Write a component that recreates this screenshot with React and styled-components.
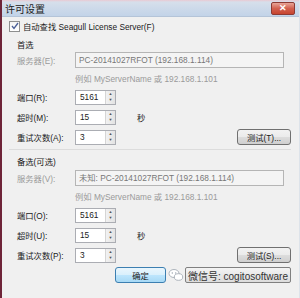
import React from 'react';
import styled, { createGlobalStyle } from 'styled-components';

const GlobalStyle = createGlobalStyle`
  body {
    margin: 0;
    background: #fff;
  }
`;

const Window = styled.div`
  width: 300px;
  height: 298px;
  box-sizing: border-box;
  border-left: 2px solid #6e2438;
  border-right: 1px solid #dde3ea;
  background: #f0f0f0;
  display: flex;
  flex-direction: column;
  font-family: 'Liberation Sans', 'Noto Sans CJK SC', sans-serif;
  font-size: 8.3px;
  color: #1a1a1a;
  overflow: hidden;
`;

const TitleBar = styled.div`
  height: 16px;
  flex: none;
  display: flex;
  align-items: center;
  justify-content: space-between;
  padding: 0 4px 0 3px;
  background: linear-gradient(#e9c9d2 0, #d6dfeb 2px, #c2d3e8 100%);
  border-bottom: 1px solid #b4c4d8;
  font-size: 10px;
  color: #222;
`;

const CloseButton = styled.div`
  width: 22px;
  height: 11px;
  border-radius: 2px;
  border: 1px solid #8c3a34;
  background: linear-gradient(#e8a497, #d2604f 50%, #c7442f);
  display: flex;
  align-items: center;
  justify-content: center;
  color: #fff;
  font-size: 9px;
  font-weight: bold;
  line-height: 1;
`;

const Body = styled.div`
  flex: 1;
  display: flex;
  flex-direction: column;
  padding: 2px 8px 0 7px;
`;

const CheckRow = styled.label`
  display: flex;
  align-items: center;
  gap: 3px;
  height: 14px;
`;

const Box = styled.span`
  width: 9px;
  height: 9px;
  border: 1px solid #8e8f8f;
  background: linear-gradient(#f4f4f4, #fff);
  display: flex;
  align-items: center;
  justify-content: center;
`;

const Group = styled.div`
  display: flex;
  flex-direction: column;
  padding: 0 0 0 8px;
  border-bottom: ${({ $last }) => ($last ? 'none' : '1px solid #dcdcdc')};
  padding-bottom: ${({ $last }) => ($last ? '0' : '2px')};
`;

const GroupTitle = styled.div`
  height: 14px;
  line-height: 14px;
  margin-top: ${({ $top }) => $top}px;
  margin-bottom: ${({ $bottom }) => $bottom}px;
`;

const Row = styled.div`
  display: flex;
  align-items: center;
  height: ${({ $h }) => $h || 20}px;
`;

const Label = styled.span`
  width: 58px;
  flex: none;
  color: ${({ $muted }) => ($muted ? '#9a9a9a' : '#1a1a1a')};
`;

const TextBox = styled.div`
  width: 209px;
  height: 16px;
  box-sizing: border-box;
  border: 1px solid #b5b5b5;
  background: #f4f4f4;
  color: #777;
  padding-left: 3px;
  line-height: 14px;
  white-space: nowrap;
  overflow: hidden;
`;

const Hint = styled.div`
  padding: 4px 0 0 58px;
  height: 15px;
  line-height: 14px;
  color: #9a9a9a;
  white-space: nowrap;
`;

const Spin = styled.div`
  width: 41px;
  height: 15px;
  box-sizing: border-box;
  border: 1px solid #abadb3;
  background: #fff;
  display: flex;
`;

const SpinValue = styled.span`
  flex: 1;
  padding-left: 4px;
  line-height: 13px;
`;

const SpinArrows = styled.span`
  width: 9px;
  display: flex;
  flex-direction: column;
  border-left: 1px solid #d5d5d5;
  background: linear-gradient(90deg, #f2f2f2, #e3e3e3);
  align-items: center;
  justify-content: space-around;
  font-size: 4px;
  color: #555;
  line-height: 1;
`;

const Unit = styled.span`
  margin-left: 21px;
`;

const Button = styled.div`
  width: ${({ $w }) => $w}px;
  height: 16px;
  box-sizing: border-box;
  border: 1px solid ${({ $primary }) => ($primary ? '#3c7fb1' : '#707070')};
  border-radius: 3px;
  background: ${({ $primary }) =>
    $primary
      ? 'linear-gradient(#eaf6fd, #d9f0fc 50%, #bee6fd 50%, #a7d9f5)'
      : 'linear-gradient(#f2f2f2, #ebebeb 50%, #dddddd 50%, #cfcfcf)'};
  display: flex;
  align-items: center;
  justify-content: center;
  margin-left: ${({ $right }) => ($right ? 'auto' : '0')};
  white-space: nowrap;
`;

const Footer = styled.div`
  display: flex;
  align-items: center;
  height: 18px;
  margin-top: 1px;
  padding-left: 106px;
  gap: 2px;
`;

const Mark = styled.div`
  display: flex;
  align-items: center;
  gap: 1px;
`;

const Watermark = styled.div`
  height: 16px;
  box-sizing: border-box;
  border: 1px solid #808080;
  border-radius: 2px;
  background: linear-gradient(#f4f4f4, #dcdcdc);
  padding: 0 2px;
  display: flex;
  align-items: center;
  font-size: 10px;
  color: #333;
  white-space: nowrap;
`;

const SpinBox = ({ value }) => (
  <Spin>
    <SpinValue>{value}</SpinValue>
    <SpinArrows>
      <span>▲</span>
      <span>▼</span>
    </SpinArrows>
  </Spin>
);

const ServerGroup = ({ title, top, bottom, labels, server, test, last }) => (
  <Group $last={last}>
    <GroupTitle $top={top} $bottom={bottom}>{title}</GroupTitle>
    <Row $h={16}>
      <Label $muted>{labels[0]}</Label>
      <TextBox>{server}</TextBox>
    </Row>
    <Hint>例如 MyServerName 或 192.168.1.101</Hint>
    <Row>
      <Label>{labels[1]}</Label>
      <SpinBox value="5161" />
    </Row>
    <Row>
      <Label>{labels[2]}</Label>
      <SpinBox value="15" />
      <Unit>秒</Unit>
    </Row>
    <Row>
      <Label>{labels[3]}</Label>
      <SpinBox value="3" />
      <Button $w={54} $right>{test}</Button>
    </Row>
  </Group>
);

export default function App() {
  return (
    <>
      <GlobalStyle />
      <Window>
        <TitleBar>
          <span>许可设置</span>
          <CloseButton>✕</CloseButton>
        </TitleBar>
        <Body>
          <CheckRow>
            <Box>
              <svg width="8" height="8" viewBox="0 0 8 8">
                <path d="M1 4 L3 6.5 L7 1" fill="none" stroke="#4a5f97" strokeWidth="1.3" />
              </svg>
            </Box>
            <span>自动查找 Seagull License Server(F)</span>
          </CheckRow>
          <ServerGroup
            title="首选"
            top={5}
            bottom={0}
            labels={['服务器(E):', '端口(R):', '超时(M):', '重试次数(A):']}
            server="PC-20141027RFOT (192.168.1.114)"
            test="测试(T)..."
          />
          <ServerGroup
            title="备选(可选)"
            top={5}
            bottom={1}
            labels={['服务器(V):', '端口(O):', '超时(U):', '重试次数(P):']}
            server="未知: PC-20141027RFOT (192.168.1.114)"
            test="测试(S)..."
            last
          />
          <Footer>
            <Button $w={53} $primary>确定</Button>
            <Mark>
              <svg width="16" height="14" viewBox="0 0 16 14">
                <ellipse cx="6" cy="5.5" rx="5" ry="4" fill="#fff" stroke="#9aa3ad" strokeWidth="0.8" />
                <ellipse cx="10.5" cy="9" rx="4.2" ry="3.3" fill="#fff" stroke="#9aa3ad" strokeWidth="0.8" />
                <circle cx="4.3" cy="5" r="0.7" fill="#9aa3ad" />
                <circle cx="7.7" cy="5" r="0.7" fill="#9aa3ad" />
              </svg>
              <Watermark>微信号: cogitosoftware</Watermark>
            </Mark>
          </Footer>
        </Body>
      </Window>
    </>
  );
}
